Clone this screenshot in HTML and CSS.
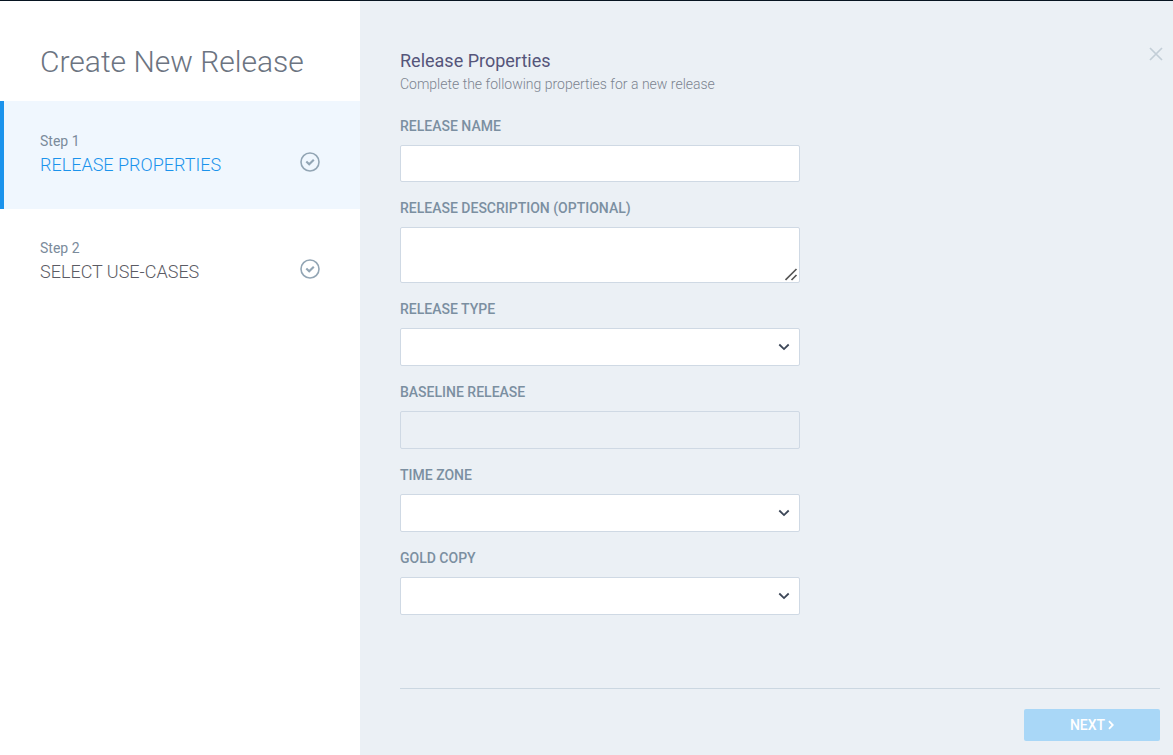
FILE: index.html
```html
<!DOCTYPE html>
<html lang="en">
<head>
<meta charset="utf-8">
<title>Create New Release</title>
<link rel="stylesheet" href="styles.css">
</head>
<body>
<div class="wizard">
  <aside class="sidebar">
    <h1 class="title">Create New Release</h1>
    <div class="step step-active">
      <div>
        <div class="step-number">Step 1</div>
        <div class="step-name">RELEASE PROPERTIES</div>
      </div>
      <svg class="check" viewBox="0 0 20 20"><circle cx="10" cy="10" r="9"/><path d="M6.3 9.5l2.9 2.8 4.6-4.6"/></svg>
    </div>
    <div class="step">
      <div>
        <div class="step-number">Step 2</div>
        <div class="step-name">SELECT USE-CASES</div>
      </div>
      <svg class="check" viewBox="0 0 20 20"><circle cx="10" cy="10" r="9"/><path d="M6.3 9.5l2.9 2.8 4.6-4.6"/></svg>
    </div>
  </aside>
  <main class="panel">
    <header class="header">
      <div>
        <h2 class="heading">Release Properties</h2>
        <p class="subtitle">Complete the following properties for a new release</p>
      </div>
      <svg class="close" viewBox="0 0 14 14"><path d="M1 1l12 12M13 1L1 13"/></svg>
    </header>
    <form class="form">
      <div class="field"><label class="label">RELEASE NAME</label><div class="control control-input"></div></div>
      <div class="field"><label class="label">RELEASE DESCRIPTION (OPTIONAL)</label><div class="control control-area"><svg class="grip" viewBox="0 0 13 13"><path d="M.5 12L11.5 1M6.5 12l5-5"/></svg></div></div>
      <div class="field"><label class="label">RELEASE TYPE</label><div class="control"><svg class="chevron" viewBox="0 0 12 8"><path d="M1.3 1.5L6 6.1l4.7-4.6"/></svg></div></div>
      <div class="field"><label class="label">BASELINE RELEASE</label><div class="control control-disabled"></div></div>
      <div class="field"><label class="label">TIME ZONE</label><div class="control"><svg class="chevron" viewBox="0 0 12 8"><path d="M1.3 1.5L6 6.1l4.7-4.6"/></svg></div></div>
      <div class="field"><label class="label">GOLD COPY</label><div class="control"><svg class="chevron" viewBox="0 0 12 8"><path d="M1.3 1.5L6 6.1l4.7-4.6"/></svg></div></div>
    </form>
    <footer class="footer">
      <button class="next" type="button">NEXT<svg class="next-icon" viewBox="0 0 6 10"><path d="M1 1.2L4.8 5 1 8.8"/></svg></button>
    </footer>
  </main>
</div>
</body>
</html>
```
FILE: styles.css
```css
* { box-sizing: border-box; }
body { margin: 0; font-family: Roboto, sans-serif; }
svg { fill: none; display: block; flex: none; }
.wizard { display: flex; width: 100%; height: 755px; border-top: 1px solid #071421; background: #ebf0f5; overflow: hidden; }
.sidebar { width: 360px; flex: none; background: #fff; }
.title { margin: 0; height: 100px; padding: 41px 40px 0; font-size: 30px; line-height: 40px; font-weight: 300; color: #6c7481; white-space: nowrap; }
.step { display: flex; justify-content: space-between; height: 108px; padding: 29px 40px 0; color: #5b5b64; }
.step-active { height: 108px; padding: 30px 40px 0 36px; border-left: 4px solid #1b93ec; background: #f0f7fe; }
.step-number { font-size: 14px; line-height: 20px; color: #7b8b9b; }
.step-name { font-size: 18px; line-height: 28px; font-weight: 300; }
.step-active .step-name { color: #1b93ec; }
.check { width: 20px; height: 20px; margin-top: 21px; stroke: #92a5b4; stroke-width: 1.6; }
.check path { stroke-width: 2.1; }
.panel { flex: 1; display: flex; flex-direction: column; padding: 47px 13px 14px 40px; }
.header { display: flex; justify-content: space-between; height: 68px; margin-right: -3px; }
.heading { margin: 0; font-size: 18px; line-height: 26px; font-weight: 400; color: #55557a; }
.subtitle { margin: 0; font-size: 14px; line-height: 20px; font-weight: 300; color: #7c8490; }
.close { width: 14px; height: 14px; margin-top: -1px; stroke: #c3ced7; stroke-width: 1.7; }
.form { display: flex; flex-direction: column; gap: 16px; width: 400px; }
.field { display: flex; flex-direction: column; gap: 9px; }
.label { font-size: 14px; line-height: 20px; font-weight: 500; color: #7b8fa1; }
.control { display: flex; align-items: center; justify-content: flex-end; height: 38px; padding-right: 9px; border: 1px solid #cfd9e4; border-radius: 2px; background: #fff; }
.control-input { height: 37px; }
.control-area { height: 56px; align-items: flex-end; padding: 0 1px 1px; }
.control-disabled { background: #ebf0f5; }
.chevron { width: 12px; height: 8px; stroke: #3c4657; stroke-width: 1.8; }
.grip { width: 13px; height: 13px; stroke: #555; stroke-width: 1.7; }
.footer { display: flex; justify-content: flex-end; margin-top: auto; padding-top: 20px; border-top: 1px solid #cbd7e1; }
.next { display: flex; align-items: center; justify-content: center; gap: 3px; width: 136px; height: 32px; padding: 0; border: 0; border-radius: 2px; background: #a9d7f7; color: #fff; font: 500 14px/20px Roboto, sans-serif; }
.next-icon { width: 6px; height: 10px; stroke: #fff; stroke-width: 1.8; }
```
